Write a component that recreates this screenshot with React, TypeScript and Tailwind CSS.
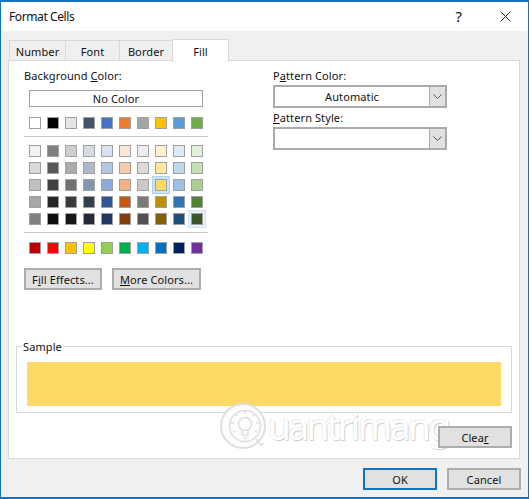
const themeRow = ["#ffffff", "#000000", "#e7e6e6", "#44546a", "#4472c4", "#ed7d31", "#a5a5a5", "#ffc000", "#5b9bd5", "#70ad47"];
const tintRows = [
  ["#f2f2f2", "#7f7f7f", "#d0cece", "#d6dce4", "#d9e1f2", "#fce4d6", "#ededed", "#fff2cc", "#ddebf7", "#e2efda"],
  ["#d9d9d9", "#595959", "#aeaaaa", "#acb9ca", "#b4c6e7", "#f8cbad", "#dbdbdb", "#ffe699", "#bdd7ee", "#c6e0b4"],
  ["#bfbfbf", "#404040", "#757171", "#8497b0", "#8ea9db", "#f4b084", "#c9c9c9", "#ffd966", "#9bc2e6", "#a9d08e"],
  ["#a6a6a6", "#262626", "#3a3838", "#333f4f", "#305496", "#c65911", "#7b7b7b", "#bf8f00", "#2f75b5", "#548235"],
  ["#808080", "#0d0d0d", "#161616", "#222b35", "#203764", "#833c0c", "#525252", "#806000", "#1f4e78", "#375623"],
];
const standardRow = ["#c00000", "#ff0000", "#ffc000", "#ffff00", "#92d050", "#00b050", "#00b0f0", "#0070c0", "#002060", "#7030a0"];

const Swatch = ({ color, selected, faint }: { color: string; selected?: boolean; faint?: boolean }) => (
  <div
    className={`h-3 w-3 border-[1.5px] border-[#a0a0a0] ${selected ? "shadow-[0_0_0_2px_#cce4f7,0_0_0_3px_#a8d4f5]" : ""} ${faint ? "shadow-[0_0_0_2px_#e5f1fb,0_0_0_3px_#cce4f7]" : ""}`}
    style={{ backgroundColor: color }}
  />
);

const SwatchRow = ({ colors, selected, faint }: { colors: string[]; selected?: number; faint?: number }) => (
  <div className="flex gap-1.5">
    {colors.map((c, i) => (
      <Swatch key={i} color={c} selected={selected === i} faint={faint === i} />
    ))}
  </div>
);

const Chevron = () => (
  <svg width="9" height="5" viewBox="0 0 9 5" fill="none" stroke="#555" strokeWidth="1">
    <path d="M0.5 0.5 L4.5 4.5 L8.5 0.5" />
  </svg>
);

const Select = ({ value }: { value?: string }) => (
  <div className="flex h-[23px] w-[174px] border-2 border-[#aaaaaa] bg-white">
    <div className="flex flex-1 items-center justify-center">{value}</div>
    <div className="flex w-4 items-center justify-center border-l border-[#aaaaaa] bg-[#e1e1e1]">
      <Chevron />
    </div>
  </div>
);

const DlgButton = ({ children, className = "border-[#adadad]" }: { children: React.ReactNode; className?: string }) => (
  <div className={`relative z-10 flex h-[22px] w-[74px] items-center justify-center border-2 bg-[#e1e1e1] ${className}`}>
    {children}
  </div>
);

export default function App() {
  return (
    <div className="flex h-[499px] w-[529px] flex-col border-x border-b-2 border-t-2 border-[#1173c0] bg-[#f0f0f0] font-['Noto_Sans',sans-serif] text-[11px] leading-none tracking-[0.1px] text-[#111111]">
      {/* Title bar */}
      <div className="flex h-[29px] items-center bg-white pl-2 pr-[17px]">
        <span className="text-[12px] tracking-[-0.4px]">Format Cells</span>
        <span className="ml-auto mr-[38px] text-[15px]">?</span>
        <svg width="11" height="11" viewBox="0 0 11 11" stroke="#222" strokeWidth="1" fill="none">
          <path d="M0.5 0.5 L10.5 10.5 M10.5 0.5 L0.5 10.5" />
        </svg>
      </div>

      {/* Tabs */}
      <div className="flex h-[29px] items-end pl-2">
        <div className="mb-[-1px] flex h-[21px] w-[56px] items-center justify-center border-l border-t border-[#d9d9d9]">Number</div>
        <div className="mb-[-1px] flex h-[21px] w-[54px] items-center justify-center border-l border-t border-[#d9d9d9]">Font</div>
        <div className="mb-[-1px] flex h-[21px] w-[53px] items-center justify-center border-l border-t border-[#d9d9d9]">Border</div>
        <div className="relative z-10 mb-[-2px] flex h-[23px] w-[57px] items-center justify-center border-x border-t border-[#d9d9d9] bg-white">Fill</div>
      </div>

      {/* Tab panel */}
      <div className="relative mx-[7px] flex h-[399px] w-[512px] flex-col border border-[#d9d9d9] bg-white">
        <div className="flex h-[285px] pl-[15px] pt-[9px]">
          <div className="w-[249px]">
            <div>Background <u>C</u>olor:</div>
            <div className="ml-[5px] mt-[9px] flex h-[17px] w-[174px] items-center justify-center border border-[#a0a0a0]">No Color</div>
            <div className="ml-[5px] mt-[10px]">
              <SwatchRow colors={themeRow} />
            </div>
            <div className="mt-[7px] h-px w-[184px] bg-[#c8c8c8]" />
            <div className="ml-[5px] mt-2 flex flex-col gap-[5px]">
              {tintRows.map((row, i) => (
                <SwatchRow key={i} colors={row} selected={i === 2 ? 7 : undefined} faint={i === 4 ? 9 : undefined} />
              ))}
            </div>
            <div className="mt-[7px] h-px w-[184px] bg-[#c8c8c8]" />
            <div className="ml-[5px] mt-[9px]">
              <SwatchRow colors={standardRow} />
            </div>
            <div className="mt-[14px] flex gap-[10px]">
              <DlgButton className="w-[78px] border-[#adadad]">F<u>i</u>ll Effects...</DlgButton>
              <DlgButton className="w-[89px] border-[#adadad]"><span><u>M</u>ore Colors...</span></DlgButton>
            </div>
          </div>
          <div>
            <div>P<u>a</u>ttern Color:</div>
            <div className="mt-1">
              <Select value="Automatic" />
            </div>
            <div className="mt-1"><u>P</u>attern Style:</div>
            <div className="mt-1">
              <Select />
            </div>
          </div>
        </div>

        {/* Sample group */}
        <div className="relative mx-[7px] h-[67px] w-[496px] border border-[#d9d9d9] px-[10px] pt-[15px]">
          <span className="absolute left-[5px] top-[-6px] bg-white px-px">Sample</span>
          <div className="h-11 bg-[#ffd966]" />
        </div>

        <div className="mr-[7px] mt-[13px] flex justify-end">
          <DlgButton>Clea<u>r</u></DlgButton>
        </div>

        {/* Watermark */}
        <div className="pointer-events-none absolute left-[211px] top-[342px] flex items-start">
          <svg width="46" height="48" viewBox="0 0 46 48" fill="none" stroke="#dedede">
            <circle cx="23" cy="23" r="22" strokeWidth="2" fill="#fdfdfd" />
            <circle cx="25" cy="23" r="15.5" strokeWidth="1.5" />
            <circle cx="25" cy="21" r="6.5" strokeWidth="1.5" />
            <path d="M22 28v4h6v-4M23 35h4M25 8v3M15 11l2 2M35 11l-2 2M11 20h3M36 20h3M13 29l2-1M37 29l-2-1M36 36l5 6 3-2" strokeWidth="1.5" />
          </svg>
          <span className="ml-[2px] mt-[4px] text-[37px] leading-none tracking-[-2.5px] text-white [text-shadow:1px_1px_1px_#cccccc,-1px_-1px_1px_#ececec]">uantrimang</span>
        </div>
      </div>

      {/* Footer buttons */}
      <div className="flex justify-end gap-[10px] pr-[7px] pt-[9px]">
        <DlgButton className="border-[#0f73c0]">OK</DlgButton>
        <DlgButton>Cancel</DlgButton>
      </div>
    </div>
  );
}
